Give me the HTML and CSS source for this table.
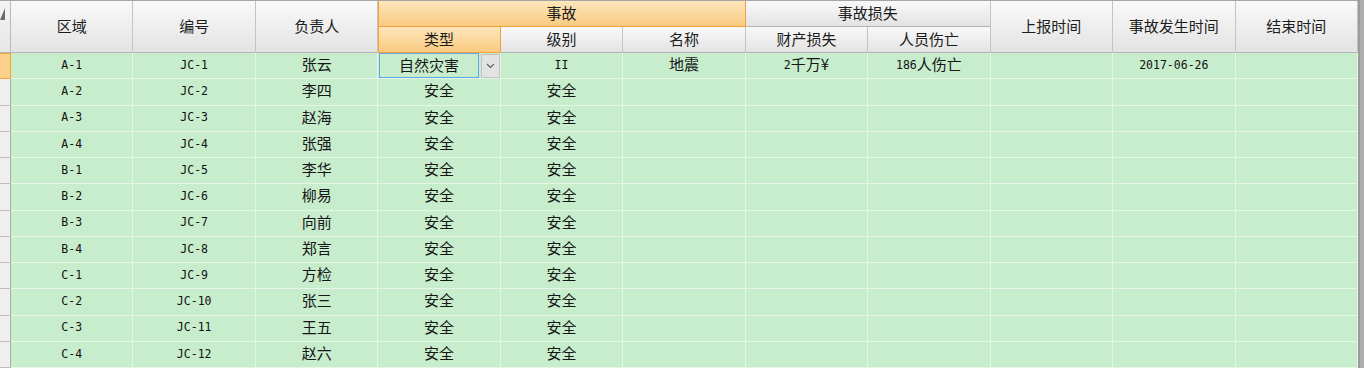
FILE: index.html
```html
<!DOCTYPE html>
<html>
<head>
<meta charset="utf-8">
<link rel="stylesheet" href="styles.css">
</head>
<body>
<div class="wrap">
  <div class="grid">
    <div class="h corner r2"><svg class="tri" width="5" height="12" viewBox="0 0 5 12"><polygon points="5,0 5,12 0,12" fill="#6b6b6b"/></svg></div>
    <div class="h r2">区域</div>
    <div class="h r2">编号</div>
    <div class="h r2">负责人</div>
    <div class="h ho c3">事故</div>
    <div class="h c2">事故损失</div>
    <div class="h r2">上报时间</div>
    <div class="h r2">事故发生时间</div>
    <div class="h r2">结束时间</div>
    <div class="h ho">类型</div>
    <div class="h">级别</div>
    <div class="h">名称</div>
    <div class="h">财产损失</div>
    <div class="h">人员伤亡</div>

    <div class="rh sel"></div>
    <div class="d"><span class="m">A-1</span></div>
    <div class="d"><span class="m">JC-1</span></div>
    <div class="d">张云</div>
    <div class="d combo"><div class="tb">自然灾害</div><div class="dd"><svg width="9" height="6" viewBox="0 0 9 6"><polyline points="1,1 4.5,4.5 8,1" fill="none" stroke="#5a5a5a" stroke-width="1.1"/></svg></div></div>
    <div class="d"><span class="m">II</span></div>
    <div class="d">地震</div>
    <div class="d"><span class="m">2</span>千万¥</div>
    <div class="d"><span class="m">186</span>人伤亡</div>
    <div class="d"></div>
    <div class="d"><span class="m">2017-06-26</span></div>
    <div class="d"></div>

    <div class="rh"></div><div class="d"><span class="m">A-2</span></div><div class="d"><span class="m">JC-2</span></div><div class="d">李四</div><div class="d">安全</div><div class="d">安全</div><div class="d"></div><div class="d"></div><div class="d"></div><div class="d"></div><div class="d"></div><div class="d"></div>
    <div class="rh"></div><div class="d"><span class="m">A-3</span></div><div class="d"><span class="m">JC-3</span></div><div class="d">赵海</div><div class="d">安全</div><div class="d">安全</div><div class="d"></div><div class="d"></div><div class="d"></div><div class="d"></div><div class="d"></div><div class="d"></div>
    <div class="rh"></div><div class="d"><span class="m">A-4</span></div><div class="d"><span class="m">JC-4</span></div><div class="d">张强</div><div class="d">安全</div><div class="d">安全</div><div class="d"></div><div class="d"></div><div class="d"></div><div class="d"></div><div class="d"></div><div class="d"></div>
    <div class="rh"></div><div class="d"><span class="m">B-1</span></div><div class="d"><span class="m">JC-5</span></div><div class="d">李华</div><div class="d">安全</div><div class="d">安全</div><div class="d"></div><div class="d"></div><div class="d"></div><div class="d"></div><div class="d"></div><div class="d"></div>
    <div class="rh"></div><div class="d"><span class="m">B-2</span></div><div class="d"><span class="m">JC-6</span></div><div class="d">柳易</div><div class="d">安全</div><div class="d">安全</div><div class="d"></div><div class="d"></div><div class="d"></div><div class="d"></div><div class="d"></div><div class="d"></div>
    <div class="rh"></div><div class="d"><span class="m">B-3</span></div><div class="d"><span class="m">JC-7</span></div><div class="d">向前</div><div class="d">安全</div><div class="d">安全</div><div class="d"></div><div class="d"></div><div class="d"></div><div class="d"></div><div class="d"></div><div class="d"></div>
    <div class="rh"></div><div class="d"><span class="m">B-4</span></div><div class="d"><span class="m">JC-8</span></div><div class="d">郑言</div><div class="d">安全</div><div class="d">安全</div><div class="d"></div><div class="d"></div><div class="d"></div><div class="d"></div><div class="d"></div><div class="d"></div>
    <div class="rh"></div><div class="d"><span class="m">C-1</span></div><div class="d"><span class="m">JC-9</span></div><div class="d">方检</div><div class="d">安全</div><div class="d">安全</div><div class="d"></div><div class="d"></div><div class="d"></div><div class="d"></div><div class="d"></div><div class="d"></div>
    <div class="rh"></div><div class="d"><span class="m">C-2</span></div><div class="d"><span class="m">JC-10</span></div><div class="d">张三</div><div class="d">安全</div><div class="d">安全</div><div class="d"></div><div class="d"></div><div class="d"></div><div class="d"></div><div class="d"></div><div class="d"></div>
    <div class="rh"></div><div class="d"><span class="m">C-3</span></div><div class="d"><span class="m">JC-11</span></div><div class="d">王五</div><div class="d">安全</div><div class="d">安全</div><div class="d"></div><div class="d"></div><div class="d"></div><div class="d"></div><div class="d"></div><div class="d"></div>
    <div class="rh"></div><div class="d"><span class="m">C-4</span></div><div class="d"><span class="m">JC-12</span></div><div class="d">赵六</div><div class="d">安全</div><div class="d">安全</div><div class="d"></div><div class="d"></div><div class="d"></div><div class="d"></div><div class="d"></div><div class="d"></div>
  </div>
  <div class="vs"></div>
</div>
</body>
</html>
```

FILE: styles.css
```css
* { box-sizing: border-box; }
html, body { margin: 0; padding: 0; }
body {
  width: 1364px;
  height: 368px;
  overflow: hidden;
  font-family: "Noto Sans CJK SC", "Microsoft YaHei", sans-serif;
  font-size: 15px;
  color: #161616;
  background: #ffffff;
}
.wrap {
  display: flex;
  width: 1364px;
  height: 368px;
}
.grid {
  width: 1358px;
  height: 368px;
  display: grid;
  grid-template-columns: 11px repeat(11, 1fr);
  grid-template-rows: 26px 26px;
  grid-auto-rows: 26.25px;
  border-top: 1px solid #a6a6a6;
  overflow: hidden;
}
.vs {
  width: 6px;
  height: 368px;
  background: #adadad;
  border-left: 2px solid #9b9b9b;
}
.h {
  display: flex;
  align-items: center;
  justify-content: center;
  background: linear-gradient(#f9f9f9, #e3e3e3);
  border-right: 1px solid #c4c4c4;
  border-bottom: 1px solid #b4b4b4;
  color: #1c1c1c;
  line-height: 20px;
  padding-bottom: 2px;
}
.r2 { grid-row: span 2; }
.c2 { grid-column: span 2; }
.c3 { grid-column: span 3; }
.ho {
  background: linear-gradient(#fde6bb, #f9ca80);
  border-right-color: #f2a23c;
  border-bottom-color: #f2a23c;
  box-shadow: inset 1px 0 0 #f2a23c;
}
.corner {
  display: block;
  padding: 0;
  background: linear-gradient(#f4f4f4, #e6e6e6);
  border-right-color: #b9b9b9;
}
.tri { display: block; margin-top: 7px; }
.rh {
  background: #efefef;
  border-right: 1px solid #ababab;
  border-bottom: 1px solid #bdbdbd;
}
.rh.sel {
  background: #fdd08c;
  border-right-color: #f2a23c;
  border-bottom-color: #f2a23c;
  box-shadow: inset 0 1px 0 #f2a23c;
}
.d {
  display: flex;
  align-items: center;
  justify-content: center;
  background: #c7edcc;
  border-right: 1px solid #e7f4e8;
  border-bottom: 1px solid #e7f4e8;
  line-height: 22px;
  white-space: nowrap;
  padding-bottom: 3px;
}
.m {
  font-family: "DejaVu Sans Mono", "Liberation Mono", monospace;
  font-size: 11.5px;
  line-height: 1;
  margin-top: 3px;
  color: #111;
}
.combo {
  align-items: stretch;
  justify-content: flex-start;
  padding: 0 0 0 1px;
}
.tb {
  flex: 1;
  display: flex;
  align-items: center;
  justify-content: center;
  border: 1px solid #5ca6ea;
  padding-bottom: 1px;
}
.dd {
  width: 19px;
  margin: 1px 0 0 2px;
  background: #e3e3e3;
  border: 1px solid #c2c2c2;
  display: flex;
  align-items: center;
  justify-content: center;
}
.dd svg { display: block; }
```
